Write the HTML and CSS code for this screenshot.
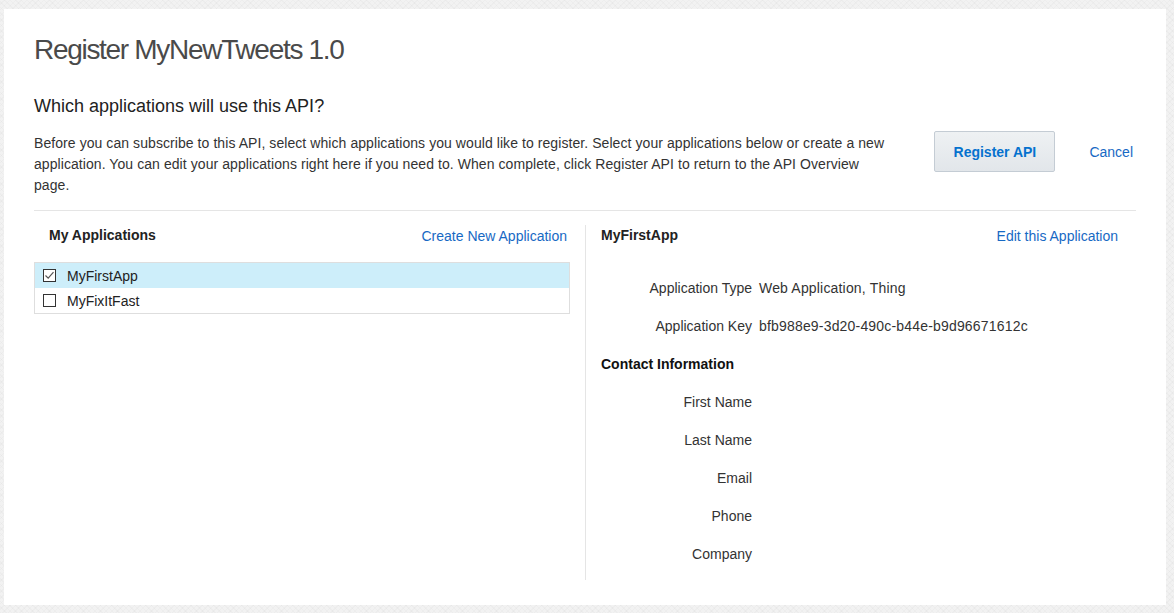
FILE: index.html
```html
<!DOCTYPE html>
<html lang="en">
<head>
<meta charset="utf-8">
<title>Register MyNewTweets 1.0</title>
<link rel="stylesheet" href="styles.css">
</head>
<body>
<main class="card">
  <h1 class="title">Register MyNewTweets 1.0</h1>
  <h2 class="subtitle">Which applications will use this API?</h2>
  <div class="intro">
    <p class="intro-text">Before you can subscribe to this API, select which applications you would like to register. Select your applications below or create a new application. You can edit your applications right here if you need to. When complete, click Register API to return to the API Overview page.</p>
    <div class="actions">
      <button class="btn" type="button">Register API</button>
      <a class="link" href="#">Cancel</a>
    </div>
  </div>
  <div class="columns">
    <section class="apps">
      <div class="col-head">
        <h3 class="col-title">My Applications</h3>
        <a class="link" href="#">Create New Application</a>
      </div>
      <ul class="app-list">
        <li class="app-row selected">
          <span class="check checked"><svg viewBox="0 0 13 13" width="13" height="13"><path d="M2.5 6.5 L5.2 9.2 L10.5 3.2" fill="none" stroke="#555" stroke-width="1.2"/></svg></span>
          <span>MyFirstApp</span>
        </li>
        <li class="app-row">
          <span class="check"></span>
          <span>MyFixItFast</span>
        </li>
      </ul>
    </section>
    <section class="details">
      <div class="col-head">
        <h3 class="col-title">MyFirstApp</h3>
        <a class="link" href="#">Edit this Application</a>
      </div>
      <div class="fields">
        <div class="field"><span class="label">Application Type</span><span class="value">Web Application, Thing</span></div>
        <div class="field"><span class="label">Application Key</span><span class="value">bfb988e9-3d20-490c-b44e-b9d96671612c</span></div>
        <div class="field"><h4 class="group-title">Contact Information</h4></div>
        <div class="field"><span class="label">First Name</span><span class="value"></span></div>
        <div class="field"><span class="label">Last Name</span><span class="value"></span></div>
        <div class="field"><span class="label">Email</span><span class="value"></span></div>
        <div class="field"><span class="label">Phone</span><span class="value"></span></div>
        <div class="field"><span class="label">Company</span><span class="value"></span></div>
      </div>
    </section>
  </div>
</main>
</body>
</html>
```

FILE: styles.css
```css
* { box-sizing: border-box; }

html, body { height: 100%; }

body {
  margin: 0;
  padding: 9px 8px 8px 4px;
  display: flex;
  flex-direction: column;
  font-family: "Liberation Sans", Arial, sans-serif;
  font-size: 14px;
  color: #333;
  background-color: #f2f2f2;
  background-image:
    repeating-linear-gradient(45deg, rgba(0,0,0,0.02) 0 1px, transparent 1px 4px),
    repeating-linear-gradient(-45deg, rgba(0,0,0,0.02) 0 1px, transparent 1px 4px);
}

.card {
  flex: 1;
  background: #fff;
  padding: 25px 30px 25px 30px;
}

.title {
  margin: 0;
  font-size: 28px;
  line-height: 32px;
  font-weight: normal;
  color: #4a4a4a;
  letter-spacing: -1.3px;
}

.subtitle {
  margin: 29px 0 0 0;
  font-size: 18px;
  line-height: 22px;
  font-weight: normal;
  color: #222;
}

.intro {
  display: flex;
  justify-content: space-between;
  align-items: flex-start;
  margin-top: 16px;
  padding-bottom: 14px;
  border-bottom: 1px solid #e5e5e5;
}

.intro-text {
  margin: 0;
  width: 862px;
  line-height: 21px;
  color: #333;
  letter-spacing: 0.07px;
}

.actions {
  display: flex;
  align-items: center;
  gap: 34px;
  padding-right: 3px;
  margin-top: -2px;
}

.btn {
  width: 121px;
  height: 41px;
  font-family: inherit;
  font-size: 14px;
  font-weight: bold;
  color: #0572ce;
  background: linear-gradient(#eef1f3, #e2e6ea);
  border: 1px solid #c4ccd4;
  border-radius: 2px;
  padding: 0;
}

.link {
  color: #1769c4;
  text-decoration: none;
  font-size: 14px;
}

.columns {
  display: flex;
  margin-top: 14px;
}

.apps {
  width: 536px;
  flex: none;
}

.details {
  flex: 1;
  margin-left: 15px;
  border-left: 1px solid #e5e5e5;
  padding: 0 18px 7px 15px;
}

.col-head {
  display: flex;
  justify-content: space-between;
  align-items: center;
  height: 20px;
  line-height: 20px;
}

.apps .col-head {
  padding: 0 3px 0 15px;
}

.col-title {
  margin: 0;
  font-size: 14px;
  font-weight: bold;
  color: #222;
}

.col-head .link { margin-top: 2px; }

.app-list {
  list-style: none;
  margin: 17px 0 0 0;
  padding: 0;
  border: 1px solid #dedede;
}

.app-row {
  display: flex;
  align-items: center;
  gap: 11px;
  height: 25px;
  padding-left: 8px;
  color: #222;
}

.app-row.selected {
  background: #cdeefa;
}

.check {
  width: 13px;
  height: 13px;
  border: 1px solid #333;
  background: #fff;
  display: flex;
  align-items: center;
  justify-content: center;
  flex: none;
}

.check svg { display: block; margin: -1px; }

.fields {
  margin-top: 24px;
}

.field {
  display: flex;
  align-items: center;
  height: 38px;
}

.label {
  width: 151px;
  text-align: right;
  flex: none;
  color: #333;
}

.value {
  margin-left: 7px;
  color: #333;
  letter-spacing: 0.18px;
}

.group-title {
  margin: 0;
  font-size: 14px;
  font-weight: bold;
  color: #111;
}
```
